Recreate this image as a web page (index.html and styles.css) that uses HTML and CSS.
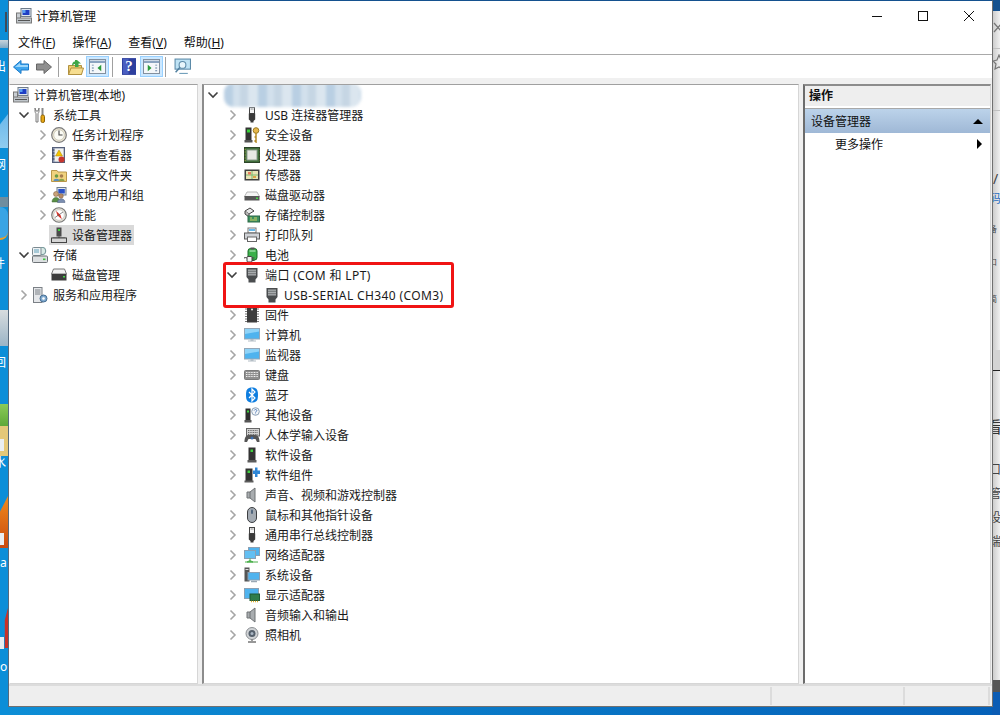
FILE: index.html
```html
<!DOCTYPE html>
<html lang="zh-CN">
<head>
<meta charset="utf-8">
<title>计算机管理</title>
<link rel="stylesheet" href="styles.css">
</head>
<body>
<svg class="defs" width="0" height="0" aria-hidden="true">
  <defs>
    <symbol id="chev-r" viewBox="0 0 8 12"><path d="M1.5 1.5 6 6l-4.500 4.500" fill="none" stroke="#a6a6a6" stroke-width="1.600"/></symbol>
    <symbol id="chev-d" viewBox="0 0 12 8"><path d="M1.500 1.500 6 6l4.500-4.500" fill="none" stroke="#404040" stroke-width="1.600"/></symbol>
    <symbol id="mgmt" viewBox="0 0 16 16"><rect x="5" y="0.500" width="10" height="8" fill="#dfe6ee" stroke="#6f7c8a"/><rect x="6.500" y="2" width="7" height="5" fill="#1f3fc4"/><path d="M6.500 2h3v3h-3z" fill="#5aa0f0"/><rect x="0.500" y="5" width="4" height="6" fill="#c9ced3" stroke="#777"/><rect x="0.500" y="10" width="15" height="5" fill="#bfc5ca" stroke="#7a7a7a"/><path d="M2 12.500h12" stroke="#555"/></symbol>
    <symbol id="tools" viewBox="0 0 16 16"><path d="M3 1v3c0 2 1 2 1 3v8h2V7c0-1 1-1 1-3V1L6 4H4z" fill="#f4f4f4" stroke="#7d7d7d"/><path d="M10.500 1v7" stroke="#888" stroke-width="2"/><rect x="9" y="8" width="3.500" height="7.500" rx="1.500" fill="#e7a715" stroke="#8f6405"/></symbol>
    <symbol id="clock" viewBox="0 0 16 16"><circle cx="8" cy="8" r="7.300" fill="#efe9d8" stroke="#7a7a7a" stroke-width="1.200"/><circle cx="8" cy="8" r="5.300" fill="#fbfbf5" stroke="#b5b1a0" stroke-width=".6"/><path d="M8 3.500V8h3.500" fill="none" stroke="#444" stroke-width="1.100"/></symbol>
    <symbol id="event" viewBox="0 0 16 16"><rect x="1.500" y="0.500" width="12" height="15" fill="#8a96b2" stroke="#56607a"/><rect x="3.500" y="1.500" width="9" height="13" fill="#f2f2ee"/><path d="M8 3l3.500 6h-7z" fill="#f4c400" stroke="#a98500" stroke-width=".5"/><circle cx="10.500" cy="12.500" r="3" fill="#c8362f"/><path d="M1.500 3h2M1.500 6h2M1.500 9h2M1.500 12h2" stroke="#2e3750"/></symbol>
    <symbol id="share" viewBox="0 0 16 16"><path d="M.5 3.500h5.500l1 1.500h8.500v9.500H.5z" fill="#f0d27e" stroke="#b9974a"/><circle cx="5.500" cy="9" r="1.800" fill="#6b9a45"/><path d="M2.500 14c0-3 6-3 6 0z" fill="#5c8ebd"/><circle cx="10.500" cy="9" r="1.800" fill="#a77d4f"/><path d="M7.500 14c0-3 6-3 6 0z" fill="#8aa24a"/></symbol>
    <symbol id="users" viewBox="0 0 16 16"><rect x="6" y="0.500" width="9" height="7.500" fill="#dfe6ee" stroke="#6f7c8a"/><rect x="7.300" y="2" width="6.500" height="4.500" fill="#2a52c8"/><circle cx="5" cy="7" r="2.500" fill="#c9a27a" stroke="#7b5b3a" stroke-width=".5"/><path d="M1 15c0-6 8-6 8 0z" fill="#5a8f45" stroke="#3c6530" stroke-width=".5"/><circle cx="10" cy="9" r="2.300" fill="#b88c68" stroke="#7b5b3a" stroke-width=".5"/><path d="M6.500 15.500c0-5 7.500-5 7.500 0z" fill="#7a8db0" stroke="#4b5b7d" stroke-width=".5"/></symbol>
    <symbol id="perf" viewBox="0 0 16 16"><circle cx="8" cy="8" r="7.300" fill="#e5e2d6" stroke="#777" stroke-width="1.100"/><circle cx="8" cy="8" r="5.300" fill="#fff" stroke="#aaa" stroke-width=".5"/><path d="M5 3.800 9.500 8l1.300 4.300L6.300 8.300z" fill="#d6362c"/><path d="M4 10.500 12 5" stroke="#555" stroke-width=".7"/></symbol>
    <symbol id="devmgr" viewBox="0 0 16 16"><rect x="5.500" y="0.500" width="5" height="9" fill="#4b4b4b"/><rect x="7" y="2" width="2" height="2" fill="#3fd03f"/><path d="M8 9.500V11M1.500 11h13" stroke="#333"/><rect x="0.500" y="11" width="15" height="4.500" fill="#d5d5d5" stroke="#444"/></symbol>
    <symbol id="storage" viewBox="0 0 16 16"><circle cx="10" cy="4" r="3.800" fill="#d8e9e5" stroke="#6c8f92"/><rect x="0.500" y="0.500" width="8.500" height="8" rx="1" fill="#eef2f4" stroke="#7c8a91"/><path d="M2 3h5M2 5h5" stroke="#5f9fb8"/><rect x="0.500" y="9" width="15" height="6.500" rx="1" fill="#dcdfe1" stroke="#6d7276"/><rect x="11" y="11.500" width="2.500" height="1.600" fill="#3fc43f"/></symbol>
    <symbol id="disk" viewBox="0 0 16 16"><path d="M2.500 2h11l2 5H.5z" fill="#f2f2f2" stroke="#777"/><rect x="0.500" y="7" width="15" height="6.500" fill="#3c3c3c"/><rect x="12" y="9" width="2" height="1.500" fill="#45d845"/></symbol>
    <symbol id="services" viewBox="0 0 16 16"><rect x="1.500" y="0.500" width="8.500" height="15" fill="#e5e7ea" stroke="#7b8086"/><path d="M3 3h5.500M3 5h5.500M3 7h5.500" stroke="#7b8086"/><circle cx="11.500" cy="11.500" r="3.500" fill="#7fa9cf" stroke="#466d92"/><circle cx="11.500" cy="11.500" r="1.300" fill="#fff"/></symbol>
    <symbol id="usb" viewBox="0 0 16 16"><rect x="5.500" y="0.500" width="5" height="6" fill="#f3f3f3" stroke="#444"/><path d="M6.800 2h.8M8.500 2h.8" stroke="#444"/><path d="M4.800 6.500h6.400v6L9.500 14v1.500h-3V14l-1.700-1.500z" fill="#3a3a3a"/></symbol>
    <symbol id="security" viewBox="0 0 16 16"><rect x="1.500" y="0.500" width="6" height="13" fill="#333"/><rect x="3" y="2.500" width="3" height="3" fill="#38d038"/><rect x="0.500" y="13" width="8" height="2.500" fill="#555"/><circle cx="12" cy="3.500" r="2.800" fill="#e6b84c" stroke="#9c7a20"/><path d="M12 6v9l-1.500-1.500M12 10h-1.500" fill="none" stroke="#b48a24" stroke-width="1.500"/></symbol>
    <symbol id="cpu" viewBox="0 0 16 16"><rect x="0.500" y="0.500" width="15" height="15" fill="#3f6d3a" stroke="#2c4429"/><path d="M.5 2.500h15M.5 5h15M.5 8h15M.5 11h15M.5 13.500h15" stroke="#c5b046" stroke-width=".5" stroke-dasharray="1.500 13"/><rect x="3" y="3" width="10" height="10" fill="#e8e8e4" stroke="#90a090"/></symbol>
    <symbol id="sensor" viewBox="0 0 16 16"><rect x="0.500" y="2.500" width="15" height="11" fill="#3f3f3f"/><rect x="2" y="4" width="12" height="8" fill="#e7e3b5"/><path d="M2 8h12M8 4v8" stroke="#7db96f"/><rect x="4" y="5" width="3" height="2.500" fill="#e77a5c"/><rect x="9" y="9" width="3" height="2" fill="#dca448"/></symbol>
    <symbol id="hdd" viewBox="0 0 16 16"><path d="M3 5h10l2.500 4.500H.5z" fill="#f4f4f4" stroke="#9a9a9a" stroke-width=".7"/><rect x="0.500" y="9" width="15" height="4.500" fill="#565656"/><rect x="12" y="10.500" width="2" height="1.500" fill="#45d845"/></symbol>
    <symbol id="stor-ctl" viewBox="0 0 16 16"><path d="M1 4 6 1l4 3-5 3z" fill="#e8e8e8" stroke="#444"/><path d="M1 4v3l4 3V7" fill="#bbb" stroke="#444"/><rect x="4" y="9" width="11.500" height="6" fill="#3e9160" stroke="#2b6845"/><path d="M6 11h2M10 11h3M6 13h7" stroke="#d0d060"/></symbol>
    <symbol id="printer" viewBox="0 0 16 16"><rect x="4" y="1" width="8" height="5" fill="#fff" stroke="#777"/><path d="M5 3h6" stroke="#35a2e0" stroke-width="1.500"/><rect x="0.500" y="6" width="15" height="6" fill="#cfd2d6" stroke="#5c5c5c"/><rect x="3.500" y="10" width="9" height="4.500" fill="#fff" stroke="#666"/></symbol>
    <symbol id="battery" viewBox="0 0 16 16"><rect x="4" y="1.500" width="9" height="11.500" rx="2.500" fill="#3bb04a" stroke="#1c6c2a"/><rect x="6.500" y="0.500" width="4" height="2" fill="#555"/><path d="M5.500 4h6" stroke="#c8f0cc"/><path d="M0 11c2-1 3 0 4 1" fill="none" stroke="#333"/><rect x="3" y="9.500" width="5" height="5.500" rx="1" fill="#f2f2f2" stroke="#444"/><path d="M8 11h2.500M8 13.500h2.500" stroke="#444"/></symbol>
    <symbol id="port" viewBox="0 0 16 16"><path d="M2.500 1h11v9L11.500 12.500V15.500h-7V12.500L2.500 10z" fill="#4a4d4f"/><rect x="4" y="2.500" width="8" height="6" fill="#a9adaf"/><path d="M4.500 4.300h7M4.500 6.700h7" stroke="#3b3d3f" stroke-dasharray="1 1"/></symbol>
    <symbol id="chip" viewBox="0 0 16 16"><rect x="3" y="0.500" width="10" height="15" fill="#3c3c3c"/><path d="M1 2h2M1 4.500h2M1 7h2M1 9.500h2M1 12h2M1 14.500h2M13 2h2M13 4.500h2M13 7h2M13 9.500h2M13 12h2M13 14.500h2" stroke="#777" stroke-width="1.200"/><circle cx="8" cy="2.500" r="1" fill="#eee"/></symbol>
    <symbol id="monitor" viewBox="0 0 16 16"><rect x="0.500" y="1.500" width="15" height="10.500" fill="#4fb3ee" stroke="#94a7b8"/><path d="M1 2h14v2.500L1 7z" fill="#8fd3f7"/><path d="M6.500 12h3v1.500h2.500v1H4v-1h2.500z" fill="#b4bec6"/></symbol>
    <symbol id="keyboard" viewBox="0 0 16 16"><rect x="0.500" y="3.500" width="15" height="9" rx="1" fill="#8f8f8f" stroke="#7a7a7a"/><path d="M2 5.500h12M2 7.500h12M2 9.500h12" stroke="#f0f0f0" stroke-dasharray="1 .6"/></symbol>
    <symbol id="bt" viewBox="0 0 16 16"><path d="M8 .5c4.500 0 6 2 6 7.500s-1.500 7.500-6 7.500S2 13.500 2 8 3.500.5 8 .5z" fill="#0f7ee0"/><path d="M5 5l6 6-3 3V2l3 3-6 6" fill="none" stroke="#fff" stroke-width="1.200"/></symbol>
    <symbol id="other" viewBox="0 0 16 16"><rect x="1.500" y="1.500" width="5" height="12" fill="#2d2d2d"/><rect x="3" y="3.500" width="2" height="2" fill="#3fd03f"/><rect x="0.500" y="13" width="7" height="2.500" fill="#555"/><circle cx="11.500" cy="4.500" r="3.800" fill="#f2f5f8" stroke="#8ca0b5"/><path d="M10.200 3.500c.3-1.500 2.800-1.300 2.600.2-.1.900-1.300.9-1.300 2M11.500 6.600v.6" fill="none" stroke="#4a76b5" stroke-width=".9"/></symbol>
    <symbol id="hid" viewBox="0 0 16 16"><rect x="2.500" y="1.500" width="13" height="7.500" fill="#d2d2d2" stroke="#666"/><path d="M4 3.500h10M4 5.500h10M4 7.500h10" stroke="#666" stroke-dasharray="1 .7"/><path d="M5 8C1 8 .5 12 .5 15h2.500L4.500 12h7l1.500 3h2.500c0-3-.5-7-4.500-7z" fill="#555"/><circle cx="8" cy="11" r="1.500" fill="#3d6fb0"/></symbol>
    <symbol id="sw" viewBox="0 0 16 16"><rect x="4.500" y="0.500" width="7" height="13" fill="#333"/><rect x="6.500" y="2.500" width="2.500" height="2.500" fill="#3fd03f"/><rect x="3.500" y="13" width="9" height="2.500" fill="#5c5c5c"/></symbol>
    <symbol id="swc" viewBox="0 0 16 16"><rect x="1.500" y="1.500" width="7" height="12.500" fill="#333"/><rect x="3.500" y="3.500" width="2.500" height="2.500" fill="#3fd03f"/><rect x="0.500" y="13.500" width="9" height="2" fill="#5c5c5c"/><path d="M11 .5h2.500v3H16V7h-2.500v3H11V7H9V3.500h2z" fill="#2f86d6"/></symbol>
    <symbol id="speaker" viewBox="0 0 16 16"><path d="M3 5h3l5-4v14l-5-4H3z" fill="#a9adb0" stroke="#6e7275"/><path d="M6 5v6" stroke="#6e7275"/></symbol>
    <symbol id="mouse" viewBox="0 0 16 16"><rect x="3.500" y="0.500" width="9" height="15" rx="4.500" fill="#a4abb3" stroke="#3d3f42"/><rect x="7" y="2.500" width="2" height="4.500" rx="1" fill="#50667e"/></symbol>
    <symbol id="network" viewBox="0 0 16 16"><rect x="4.500" y="0.500" width="11" height="8" fill="#4fb3ee" stroke="#8aa0b4"/><rect x="0.500" y="3.500" width="11" height="8" fill="#63bff2" stroke="#8aa0b4"/><path d="M6 11.500v2M1 15h13M6 13.500l-3 1.500h6z" stroke="#4cb04c" fill="#4cb04c"/></symbol>
    <symbol id="system" viewBox="0 0 16 16"><rect x="0.500" y="0.500" width="5" height="14" fill="#555"/><path d="M1.500 2.500h3" stroke="#ddd"/><rect x="4" y="5.500" width="11.500" height="7.500" fill="#4fb3ee" stroke="#8aa0b4"/><path d="M7 14.500h6" stroke="#9aa8b4" stroke-width="1.500"/></symbol>
    <symbol id="display" viewBox="0 0 16 16"><rect x="0.500" y="1.500" width="14" height="10" fill="#4fb3ee" stroke="#8aa0b4"/><rect x="6" y="7" width="9.500" height="6.500" fill="#2f7d4b" stroke="#1f5a35"/><path d="M7 14.500h7" stroke="#e0b030" stroke-width="1.500" stroke-dasharray="1 1"/></symbol>
    <symbol id="camera" viewBox="0 0 16 16"><circle cx="8" cy="6.500" r="6" fill="#d0d3d6" stroke="#8b8f93"/><circle cx="8" cy="6.500" r="3.500" fill="#55606c"/><circle cx="8" cy="6.500" r="1.500" fill="#aab7c5"/><path d="M8 12.500v1.500M4 15h8" stroke="#777" stroke-width="1.400"/></symbol>
  </defs>
</svg>

<div class="desktop">
  <div class="strip-left" aria-hidden="true">
    <span class="bit bit-a"></span><span class="bit bit-b"></span><span class="bit bit-c"></span><span class="bit bit-d"></span><span class="bit bit-d2"></span><span class="bit bit-e"></span><span class="bit bit-f"></span><span class="bit bit-f2"></span><span class="bit bit-g"></span><span class="bit bit-h"></span>
    <span class="bit box b1"></span><span class="bit box b2"></span><span class="bit box b3"></span>
    <span class="stxt st1">出</span><span class="stxt st2">网</span><span class="stxt st3">件</span><span class="stxt st4">回</span><span class="stxt st5">水</span><span class="stxt st6">a</span><span class="stxt st7">o</span>
  </div>
  <div class="strip-right" aria-hidden="true">
    <span class="rt-top"></span>
    <svg class="rt-x" viewBox="0 0 8 12"><path d="M1 1l8 9M9 1 1 10" stroke="#777" stroke-width="1.200" fill="none"/></svg>
    <svg class="rt-star" viewBox="0 0 8 16"><path d="M6 1l2 5 4 1-3 3 1 5-4-2-4 2 1-5-3-3 4-1z" stroke="#777" stroke-width="1.200" fill="none"/></svg>
    <span class="rt-line rl1"></span><span class="rt-line rl2"></span><span class="rt-band"></span>
    <span class="rtxt r1">/</span><span class="rtxt r2 r-blue">码</span><span class="rtxt r3">备</span><span class="rtxt r4">口</span><span class="rtxt r5">简</span>
    <span class="rtxt r6 r-big">看</span><span class="rtxt r7">口</span><span class="rtxt r8">管</span><span class="rtxt r9">设</span><span class="rtxt r10">端</span>
    <span class="rt-dark"></span><span class="rt-blue"></span>
  </div>

  <div class="window">
    <header class="titlebar">
      <svg class="title-icon"><use href="#mgmt"/></svg>
      <span class="title-text">计算机管理</span>
      <div class="win-controls">
        <svg class="ctl" viewBox="0 0 46 22"><path d="M18 11.500h10" stroke="#111"/></svg>
        <svg class="ctl" viewBox="0 0 46 22"><rect x="18.500" y="6.500" width="9" height="9" fill="none" stroke="#111"/></svg>
        <svg class="ctl" viewBox="0 0 46 22"><path d="M18 6l10 10M28 6 18 16" stroke="#111" fill="none"/></svg>
      </div>
    </header>
    <nav class="menubar">
      <span class="menu-item">文件(<u>F</u>)</span>
      <span class="menu-item">操作(<u>A</u>)</span>
      <span class="menu-item">查看(<u>V</u>)</span>
      <span class="menu-item">帮助(<u>H</u>)</span>
    </nav>
    <div class="toolbar">
      <svg class="tool tool-back" viewBox="0 0 16 16"><path d="M8 1.500.5 8 8 14.500V11h7.500V5H8z" fill="#3ea5ee" stroke="#1878c8"/><path d="M7 4 2 8h13V6H7z" fill="#9bd6fb"/></svg>
      <svg class="tool tool-fwd" viewBox="0 0 16 16"><path d="M8 1.500 15.500 8 8 14.500V11H.5V5H8z" fill="#8f8f8f" stroke="#666"/></svg>
      <span class="tool-sep"></span>
      <svg class="tool tool-up" viewBox="0 0 16 16"><path d="M.5 6.500h13v9H.5z" fill="#eccd70" stroke="#b1913f"/><path d="M.5 15.500 3 9h12.500l-2 6.500z" fill="#f6dd8f" stroke="#b1913f"/><path d="M9 1l4 3.500h-2.500V8H7V5C5.500 5 5 6 4 7c0-3 1-4.500 3-4.500V1z" fill="#3fa648"/></svg>
      <span class="tool-btn tb1"><svg class="tool-in" viewBox="0 0 18 16"><rect x="0.500" y="0.500" width="17" height="15" fill="#f4f7fa" stroke="#7d8a99"/><path d="M1 3h16" stroke="#8aa3c0" stroke-width="2.500"/><path d="M3 6h2v1H3zM3 9h2v1H3zM3 12h2v1H3z" fill="#5f7f9f"/><path d="M13 6v7l-4-3.500z" fill="#2a9a3a"/></svg></span>
      <span class="tool-sep sep2"></span>
      <svg class="tool tool-help" viewBox="0 0 15 18"><rect width="15" height="18" fill="#2d3f9e"/><rect x="1" y="1" width="6" height="16" fill="#4a5ec0"/><text x="7.500" y="14" class="help-q">?</text></svg>
      <span class="tool-btn tb2"><svg class="tool-in" viewBox="0 0 18 16"><rect x="0.500" y="0.500" width="17" height="15" fill="#f4f7fa" stroke="#7d8a99"/><path d="M1 3h16" stroke="#8aa3c0" stroke-width="2.500"/><path d="M13 6h2v1h-2zM13 9h2v1h-2zM13 12h2v1h-2z" fill="#5f7f9f"/><path d="M5 6v7l4-3.500z" fill="#2a9a3a"/></svg></span>
      <span class="tool-sep sep3"></span>
      <svg class="tool tool-mon" viewBox="0 0 16 16"><rect x="1" y="1" width="14.500" height="9.500" fill="#bfe3f5" stroke="#5c8aa8"/><circle cx="8" cy="6.500" r="3.200" fill="#e8f6fc" stroke="#5c8aa8"/><path d="M5.500 9 1.500 13.500" stroke="#4f7f9f" stroke-width="1.400"/><path d="M5 14.500h8" stroke="#6b9bb8"/></svg>
    </div>

    <div class="panes">
      <aside class="pane pane-left">
        <div class="row lv0"><svg class="ic"><use href="#mgmt"/></svg><span>计算机管理(本地)</span></div>
        <div class="row lv1"><svg class="cv-d"><use href="#chev-d"/></svg><svg class="ic"><use href="#tools"/></svg><span>系统工具</span></div>
        <div class="row lv2"><svg class="cv-r"><use href="#chev-r"/></svg><svg class="ic"><use href="#clock"/></svg><span>任务计划程序</span></div>
        <div class="row lv2"><svg class="cv-r"><use href="#chev-r"/></svg><svg class="ic"><use href="#event"/></svg><span>事件查看器</span></div>
        <div class="row lv2"><svg class="cv-r"><use href="#chev-r"/></svg><svg class="ic"><use href="#share"/></svg><span>共享文件夹</span></div>
        <div class="row lv2"><svg class="cv-r"><use href="#chev-r"/></svg><svg class="ic"><use href="#users"/></svg><span>本地用户和组</span></div>
        <div class="row lv2"><svg class="cv-r"><use href="#chev-r"/></svg><svg class="ic"><use href="#perf"/></svg><span>性能</span></div>
        <div class="row lv2 leaf"><div class="selected"><svg class="ic"><use href="#devmgr"/></svg><span>设备管理器</span></div></div>
        <div class="row lv1"><svg class="cv-d"><use href="#chev-d"/></svg><svg class="ic"><use href="#storage"/></svg><span>存储</span></div>
        <div class="row lv2 leaf"><div class="plain"><svg class="ic"><use href="#disk"/></svg><span>磁盘管理</span></div></div>
        <div class="row lv1"><svg class="cv-r"><use href="#chev-r"/></svg><svg class="ic"><use href="#services"/></svg><span>服务和应用程序</span></div>
      </aside>

      <main class="pane pane-center">
        <div class="row c0"><svg class="cv-d"><use href="#chev-d"/></svg><span class="blur-name"></span></div>
        <div class="row c1"><svg class="cv-r"><use href="#chev-r"/></svg><svg class="ic"><use href="#usb"/></svg><span>USB 连接器管理器</span></div>
        <div class="row c1"><svg class="cv-r"><use href="#chev-r"/></svg><svg class="ic"><use href="#security"/></svg><span>安全设备</span></div>
        <div class="row c1"><svg class="cv-r"><use href="#chev-r"/></svg><svg class="ic"><use href="#cpu"/></svg><span>处理器</span></div>
        <div class="row c1"><svg class="cv-r"><use href="#chev-r"/></svg><svg class="ic"><use href="#sensor"/></svg><span>传感器</span></div>
        <div class="row c1"><svg class="cv-r"><use href="#chev-r"/></svg><svg class="ic"><use href="#hdd"/></svg><span>磁盘驱动器</span></div>
        <div class="row c1"><svg class="cv-r"><use href="#chev-r"/></svg><svg class="ic"><use href="#stor-ctl"/></svg><span>存储控制器</span></div>
        <div class="row c1"><svg class="cv-r"><use href="#chev-r"/></svg><svg class="ic"><use href="#printer"/></svg><span>打印队列</span></div>
        <div class="row c1"><svg class="cv-r"><use href="#chev-r"/></svg><svg class="ic"><use href="#battery"/></svg><span>电池</span></div>
        <div class="row c1"><svg class="cv-d"><use href="#chev-d"/></svg><svg class="ic"><use href="#port"/></svg><span class="wide">端口 (COM 和 LPT)</span></div>
        <div class="row c2"><svg class="ic"><use href="#port"/></svg><span class="wide">USB-SERIAL CH340 (COM3)</span></div>
        <div class="row c1"><svg class="cv-r"><use href="#chev-r"/></svg><svg class="ic"><use href="#chip"/></svg><span>固件</span></div>
        <div class="row c1"><svg class="cv-r"><use href="#chev-r"/></svg><svg class="ic"><use href="#monitor"/></svg><span>计算机</span></div>
        <div class="row c1"><svg class="cv-r"><use href="#chev-r"/></svg><svg class="ic"><use href="#monitor"/></svg><span>监视器</span></div>
        <div class="row c1"><svg class="cv-r"><use href="#chev-r"/></svg><svg class="ic"><use href="#keyboard"/></svg><span>键盘</span></div>
        <div class="row c1"><svg class="cv-r"><use href="#chev-r"/></svg><svg class="ic"><use href="#bt"/></svg><span>蓝牙</span></div>
        <div class="row c1"><svg class="cv-r"><use href="#chev-r"/></svg><svg class="ic"><use href="#other"/></svg><span>其他设备</span></div>
        <div class="row c1"><svg class="cv-r"><use href="#chev-r"/></svg><svg class="ic"><use href="#hid"/></svg><span>人体学输入设备</span></div>
        <div class="row c1"><svg class="cv-r"><use href="#chev-r"/></svg><svg class="ic"><use href="#sw"/></svg><span>软件设备</span></div>
        <div class="row c1"><svg class="cv-r"><use href="#chev-r"/></svg><svg class="ic"><use href="#swc"/></svg><span>软件组件</span></div>
        <div class="row c1"><svg class="cv-r"><use href="#chev-r"/></svg><svg class="ic"><use href="#speaker"/></svg><span>声音、视频和游戏控制器</span></div>
        <div class="row c1"><svg class="cv-r"><use href="#chev-r"/></svg><svg class="ic"><use href="#mouse"/></svg><span>鼠标和其他指针设备</span></div>
        <div class="row c1"><svg class="cv-r"><use href="#chev-r"/></svg><svg class="ic"><use href="#usb"/></svg><span>通用串行总线控制器</span></div>
        <div class="row c1"><svg class="cv-r"><use href="#chev-r"/></svg><svg class="ic"><use href="#network"/></svg><span>网络适配器</span></div>
        <div class="row c1"><svg class="cv-r"><use href="#chev-r"/></svg><svg class="ic"><use href="#system"/></svg><span>系统设备</span></div>
        <div class="row c1"><svg class="cv-r"><use href="#chev-r"/></svg><svg class="ic"><use href="#display"/></svg><span>显示适配器</span></div>
        <div class="row c1"><svg class="cv-r"><use href="#chev-r"/></svg><svg class="ic"><use href="#speaker"/></svg><span>音频输入和输出</span></div>
        <div class="row c1"><svg class="cv-r"><use href="#chev-r"/></svg><svg class="ic"><use href="#camera"/></svg><span>照相机</span></div>
        <div class="highlight"></div>
      </main>

      <aside class="pane pane-right">
        <div class="act-head">操作</div>
        <div class="act-bar"><span>设备管理器</span><i class="tri-up"></i></div>
        <div class="act-item"><span>更多操作</span><i class="tri-right"></i></div>
      </aside>
    </div>

    <footer class="statusbar">
      <span class="sb sb-main"></span><span class="sb sb-mid"></span><span class="sb sb-end"></span>
    </footer>
  </div>
</div>
</body>
</html>
```

FILE: styles.css
```css
* { box-sizing: border-box; }
html, body { margin: 0; padding: 0; }
body {
  width: 1000px;
  height: 715px;
  overflow: hidden;
  font-family: "Noto Sans", "Noto Sans CJK SC", sans-serif;
  font-size: 12px;
  color: #1a1a1a;
}
.defs { position: absolute; }
.desktop {
  position: relative;
  width: 1000px;
  height: 715px;
  overflow: hidden;
  background: linear-gradient(90deg, #0d8ed6 0, #0a7dc9 40%, #0560b8 100%);
}

/* Desktop fragments showing at the sides of the window */
.strip-left { position: absolute; left: 0; top: 0; width: 8px; height: 715px; overflow: hidden; background: #0b8ed8; }
.bit { position: absolute; left: 0; width: 8px; display: block; }
.bit-a { top: 12px; height: 20px; left: 5px; width: 2px; background: #3f4a58; }
.bit-b { top: 40px; height: 8px; background: linear-gradient(#c8d4dc, #7fa8c4); }
.bit-c { top: 114px; height: 34px; background: linear-gradient(#6cb8ea, #8fccf0); clip-path: polygon(0 30%, 100% 0, 100% 100%, 0 100%); }
.bit-d { top: 197px; height: 10px; background: #6f8d9f; }
.bit-d2 { top: 207px; height: 33px; background: #3aa4e4; border-bottom: 2px solid #f0a020; border-radius: 0 12px 12px 0; }
.bit-e { top: 310px; height: 36px; background: linear-gradient(#d8dcde, #9ab4c6); }
.bit-f { top: 404px; height: 22px; background: linear-gradient(#8acb58, #5ea838); }
.bit-f2 { top: 426px; height: 30px; background: #e4c878; }
.bit-g { top: 496px; height: 52px; background: linear-gradient(#f08a1c, #c84a10); clip-path: polygon(100% 0, 100% 100%, 0 100%, 0 30%); }
.bit-h { top: 608px; height: 40px; background: #c83228; clip-path: polygon(100% 0, 100% 100%, 60% 100%, 60% 30%); }
.box { background: #e9eef2; width: 4px; height: 12px; }
.b1 { top: 439px; }
.b2 { top: 533px; }
.b3 { top: 637px; }
.stxt { position: absolute; left: -6px; font-size: 12px; line-height: 14px; color: #fff; }
.st1 { top: 60px; }
.st2 { top: 158px; }
.st3 { top: 257px; left: -7px; }
.st4 { top: 356px; }
.st5 { top: 456px; }
.st6 { top: 556px; left: 0; }
.st7 { top: 660px; left: 0; }

.strip-right { position: absolute; left: 992px; top: 0; width: 8px; height: 715px; overflow: hidden; background: linear-gradient(90deg, #c8c8c8, #f0f0f0); }
.rt-top { position: absolute; left: 0; top: 0; width: 8px; height: 11px; background: #14518f; }
.rt-x { position: absolute; left: 1px; top: 22px; width: 8px; height: 12px; }
.rt-star { position: absolute; left: 1px; top: 54px; width: 8px; height: 16px; }
.rt-line { position: absolute; left: 0; width: 8px; height: 1px; background: #c0c0c0; }
.rl1 { top: 48px; }
.rl2 { top: 110px; }
.rt-band { position: absolute; left: 0; top: 350px; width: 8px; height: 21px; background: #d4d4d4; border-bottom: 1px solid #222; }
.rtxt { position: absolute; left: -3px; font-size: 12px; line-height: 14px; color: #444; }
.r-blue { color: #2a6fc0; }
.r1 { top: 172px; font-size: 14px; left: 1px; }
.r2 { top: 192px; }
.r3 { top: 222px; font-size: 8px; }
.r4 { top: 255px; font-size: 8px; }
.r5 { top: 292px; font-size: 8px; }
.r6 { top: 418px; font-size: 16px; line-height: 18px; left: -6px; color: #333; }
.r7 { top: 463px; }
.r8 { top: 487px; }
.r9 { top: 511px; }
.r10 { top: 535px; }
.rt-dark { position: absolute; left: 0; top: 680px; width: 8px; height: 12px; background: #555; }
.rt-blue { position: absolute; left: 0; top: 692px; width: 8px; height: 23px; background: #0b5cb4; }

/* Window */
.window {
  position: absolute;
  left: 8px;
  top: 0;
  width: 985px;
  height: 707px;
  display: flex;
  flex-direction: column;
  background: #fff;
  border-left: 1px solid #56697c;
  border-right: 1px solid #707070;
  border-bottom: 1px solid #707070;
  border-top: 1px solid #14518f;
}
.titlebar { display: flex; align-items: center; height: 30px; flex: none; padding-left: 7px; }
.title-icon { width: 16px; height: 16px; flex: none; }
.title-text { margin-left: 4px; font-size: 12px; color: #111; }
.win-controls { margin-left: auto; display: flex; align-items: center; }
.ctl { width: 46px; height: 22px; display: block; }

.menubar { display: flex; align-items: center; height: 24px; flex: none; padding: 1px 0 1px 9px; gap: 17px; border-bottom: 1px solid #a9a9a9; }
.menu-item { color: #111; line-height: 20px; }
.menu-item u { text-underline-offset: 1px; }

.toolbar { display: flex; align-items: center; height: 23px; flex: none; padding-left: 4px; }
.tool { display: block; flex: none; }
.tool-back, .tool-fwd { width: 16px; height: 16px; }
.tool-fwd { margin-left: 7px; }
.tool-sep { width: 1px; height: 20px; background: #a0a0a0; margin-left: 6px; flex: none; }
.tool-up { width: 16px; height: 16px; margin-left: 9px; }
.tool-btn { display: flex; align-items: center; justify-content: center; width: 23px; height: 21px; background: #cce8ff; border: 1px solid #99d1ff; margin-left: 2px; flex: none; }
.tool-in { width: 17px; height: 15px; }
.sep2 { margin-left: 3px; }
.tool-help { width: 14px; height: 17px; margin-left: 9px; }
.help-q { font-family: "Liberation Serif", serif; font-size: 16px; font-weight: bold; fill: #fff; text-anchor: middle; }
.tb2 { margin-left: 4px; }
.sep3 { margin-left: 2px; }
.tool-mon { width: 17px; height: 17px; margin-left: 8px; }

.panes { flex: 1; display: flex; gap: 4px; background: #f0f0f0; padding-top: 6px; min-height: 0; }
.pane { background: #fff; border: 1px solid #d6d6d6; border-top-color: #a0a0a0; min-height: 0; position: relative; overflow: hidden; }
.pane-left { width: 189px; flex: none; border-left-color: #fff; }
.pane-center { width: 597px; flex: none; border-left: 2px solid #8c8c8c; }
.pane-right { flex: 1; border-left: 2px solid #6c6c6c; border-top: 2px solid #8c8c8c; margin-right: 1px; }

.row { display: flex; align-items: center; height: 20px; white-space: nowrap; color: #1a1a1a; }
.ic { width: 16px; height: 16px; flex: none; }
.cv-r { width: 8px; height: 12px; flex: none; }
.cv-d { width: 12px; height: 8px; flex: none; }
.row span { margin-left: 5px; }
.row .wide { letter-spacing: .38px; }

/* Left tree indent */
.lv0 { padding-left: 3px; }
.lv1 .cv-r { margin-left: 10px; margin-right: 4px; }
.lv1 .cv-d { margin-left: 8px; margin-right: 2px; }
.lv2 .cv-r { margin-left: 29px; margin-right: 4px; }
.lv2.leaf { padding-left: 39px; }
.selected, .plain { display: flex; align-items: center; height: 20px; padding: 0 2px; }
.selected { background: #d9d9d9; }

/* Center tree indent */
.c0 .cv-d { margin-left: 3px; }
.c1 .cv-r { margin-left: 25px; margin-right: 7px; }
.c1 .cv-d { margin-left: 22px; margin-right: 6px; }
.c2 { padding-left: 60px; }
.c2 span { margin-left: 4px; }
.row .blur-name {
  display: block;
  width: 137px;
  height: 24px;
  margin-left: 5px;
  margin-top: -1px;
  border-radius: 9px;
  background: repeating-linear-gradient(90deg, #b9cfe3 0 9px, #d2e0ec 9px 16px, #c6d6e4 16px 24px, #dbe6ef 24px 34px);
  filter: blur(1.500px);
}
.highlight {
  position: absolute;
  left: 19px;
  top: 177px;
  width: 231px;
  height: 46px;
  border: 3px solid #f01414;
  border-radius: 3px;
}

/* Right pane */
.act-head { height: 20px; padding-left: 4px; line-height: 20px; font-weight: 700; background: #eeeeee; color: #111; }
.act-bar {
  display: flex;
  align-items: center;
  justify-content: space-between;
  height: 25px;
  padding: 0 7px 0 6px;
  margin-top: 2px;
  border-top: 1px solid #a8a8a8;
  background: linear-gradient(#bcd3ea, #9fb8d6);
  color: #111;
}
.act-item { display: flex; align-items: center; justify-content: space-between; height: 22px; padding: 0 8px 0 30px; color: #111; }
.tri-up { display: block; width: 0; height: 0; border-left: 5px solid transparent; border-right: 5px solid transparent; border-bottom: 5px solid #000; }
.tri-right { display: block; width: 0; height: 0; border-top: 5px solid transparent; border-bottom: 5px solid transparent; border-left: 5px solid #000; }

/* Status bar */
.statusbar { display: flex; height: 22px; flex: none; background: #eeeeee; border-top: 2px solid #dcdcdc; }
.sb { display: block; height: 18px; margin-top: 1px; border-right: 2px solid #dcdcdc; }
.sb-main { width: 763px; }
.sb-mid { width: 133px; }
.sb-end { width: 85px; }
```
